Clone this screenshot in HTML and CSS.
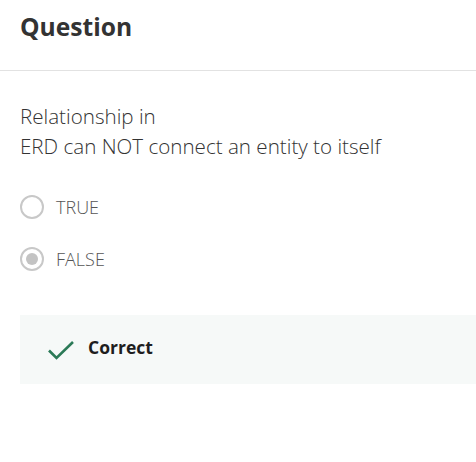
FILE: index.html
```html
<!DOCTYPE html>
<html>
<head>
<meta charset="utf-8">
<link rel="stylesheet" href="styles.css">
</head>
<body>
<header class="header">
  <h1 class="title">Question</h1>
</header>
<main class="content">
  <p class="prompt">Relationship in<br>ERD can NOT connect an entity to itself</p>
  <div class="options">
    <label class="option"><span class="radio"></span><span class="option-text">TRUE</span></label>
    <label class="option"><span class="radio checked"></span><span class="option-text">FALSE</span></label>
  </div>
  <div class="feedback">
    <svg class="check" width="28" height="22" viewBox="0 0 28 22"><path d="M2 11.5 L9.5 19 L26 3" fill="none" stroke="#2b7a57" stroke-width="2.6"/></svg>
    <span class="feedback-text">Correct</span>
  </div>
</main>
</body>
</html>
```
FILE: styles.css
```css
html, body { margin: 0; padding: 0; background: #fff; }
body { font-family: "Open Sans", "Liberation Sans", sans-serif; color: #333; width: 476px; overflow: hidden; }
.header { height: 71px; border-bottom: 1px solid #e2e2e2; padding: 0 20px; box-sizing: border-box; display: flex; align-items: flex-start; }
.title { margin: 0; padding-top: 9px; font-size: 24.6px; font-weight: 700; color: #333; line-height: 36px; }
.content { padding: 30px 20px 0 20px; }
.prompt { margin: 0; font-size: 20.6px; font-weight: 300; line-height: 30px; color: #333; }
.options { display: flex; flex-direction: column; gap: 28px; margin-top: 34px; }
.option { display: flex; align-items: center; gap: 12px; height: 24px; }
.radio { width: 24px; height: 24px; box-sizing: border-box; border: 2.5px solid #c8c8c8; border-radius: 50%; display: flex; align-items: center; justify-content: center; }
.radio.checked::after { content: ""; width: 12px; height: 12px; border-radius: 50%; background: #c3c3c3; }
.option-text { font-size: 18px; font-weight: 300; color: #555; }
.feedback { margin-top: 44px; margin-right: -20px; height: 69px; background: #f6f9f8; display: flex; align-items: center; padding-left: 27px; gap: 13px; }
.check { display: block; }
.feedback-text { font-size: 17.5px; font-weight: 700; color: #1e1e1e; margin-bottom: 6px; }
```
